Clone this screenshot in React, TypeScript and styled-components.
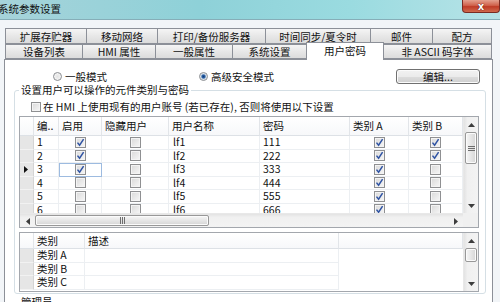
import React from "react";
import styled, { createGlobalStyle } from "styled-components";

const GlobalStyle = createGlobalStyle`
  html, body { margin: 0; padding: 0; background: #f2f5f8; }
  body {
    font-family: "Noto Sans CJK SC", "Noto Sans", sans-serif;
    font-size: 10.5px;
    color: #111;
  }
  * { box-sizing: border-box; }
`;

const Window = styled.div`
  width: 500px;
  height: 302px;
  overflow: hidden;
  background: #f2f5f8;
  display: flex;
  flex-direction: column;
`;

const TitleBar = styled.div`
  height: 20px;
  flex: none;
  display: flex;
  justify-content: space-between;
  align-items: flex-start;
  background: linear-gradient(to right, #a6d3da 0%, #8ed1d8 40%, #9adbe0 70%, #b7e3e7 100%);
  border-bottom: 1px solid #86aeb8;
`;

const Title = styled.span`
  margin-left: -2px;
  line-height: 16px;
  padding-top: 1px;
  font-size: 10.5px;
  color: #101010;
`;

const CloseBtn = styled.div`
  width: 38px;
  height: 13px;
  border: 1px solid #7a2b22;
  border-top: none;
  border-radius: 0 0 4px 4px;
  background: linear-gradient(#e4a08f, #d0624c 45%, #bf3b26 55%, #d06a4e);
  display: flex;
  align-items: center;
  justify-content: center;
  color: #fff;
  font-family: "DejaVu Sans", sans-serif;
  font-weight: bold;
  font-size: 10px;
  text-shadow: 0 0 1px #5a1a10, 0 0 1px #5a1a10;
`;

const Body = styled.div`
  flex: 1;
  display: flex;
  flex-direction: column;
  padding: 8px 7px 0 4px;
`;

const TabRow = styled.div<{ $h: number }>`
  display: flex;
  align-items: flex-end;
  height: ${(p) => p.$h}px;
  margin-left: 1px;
`;

const Tab = styled.div<{ $w: number; $active?: boolean }>`
  width: ${(p) => p.$w + 1}px;
  margin-right: -1px;
  height: ${(p) => (p.$active ? 18 : 100)}${(p) => (p.$active ? "px" : "%")};
  margin-bottom: ${(p) => (p.$active ? -1 : 0)}px;
  position: relative;
  z-index: ${(p) => (p.$active ? 2 : 1)};
  border: 1px solid #8c9098;
  border-bottom: ${(p) => (p.$active ? "none" : "1px solid #8c9098")};
  background: ${(p) => (p.$active ? "#fff" : "linear-gradient(#f5f5f5, #e6e6e6 55%, #dcdcdc)")};
  display: flex;
  justify-content: center;
  align-items: ${(p) => (p.$active ? "flex-start" : "center")};
  padding-top: ${(p) => (p.$active ? 1 : 0)}px;
  line-height: 13px;
  white-space: nowrap;
`;

const Panel = styled.div`
  width: 489px;
  flex: 1;
  background: #fff;
  border: 1px solid #8c9098;
  border-bottom: none;
  padding: 0 6px 0 9px;
  display: flex;
  flex-direction: column;
`;

const ModeRow = styled.div`
  margin-top: 9px;
  height: 15px;
  display: flex;
  align-items: center;
`;

const RadioItem = styled.label<{ $w?: number; $ml?: number }>`
  display: flex;
  align-items: center;
  gap: 3px;
  margin-left: ${(p) => p.$ml ?? 0}px;
  width: ${(p) => (p.$w ? `${p.$w}px` : "auto")};
  line-height: 12px;
`;

const RadioDot = styled.span<{ $on?: boolean }>`
  width: 9px;
  height: 9px;
  border-radius: 50%;
  border: 1px solid #8a8d91;
  background: ${(p) =>
    p.$on
      ? "radial-gradient(circle, #0f3a78 0, #2b63a8 1.6px, #cfd9e4 2.6px, #f4f4f4 4px)"
      : "radial-gradient(circle, #e3e3e3 0, #f7f7f7 4px)"};
`;

const Button = styled.div`
  margin-left: auto;
  margin-right: 6px;
  width: 84px;
  height: 15px;
  border: 1px solid #707070;
  border-radius: 3px;
  background: linear-gradient(#f2f2f2, #ebebeb 50%, #dddddd 51%, #cfcfcf);
  box-shadow: inset 0 0 0 1px #fbfbfb;
  display: flex;
  align-items: center;
  justify-content: center;
  line-height: 12px;
`;

const Group = styled.fieldset`
  margin: 0;
  padding: 0 6px 1px 4px;
  border: 1px solid #d5dfe5;
  border-radius: 3px;
  min-width: 0;
`;

const Legend = styled.legend`
  padding: 0 2px;
  line-height: 12px;
  font-size: 10.5px;
`;

const CheckRow = styled.div`
  margin-top: 4px;
  height: 14px;
  padding-left: 12px;
  display: flex;
  align-items: center;
  gap: 2px;
  line-height: 12px;
`;

const Box = styled.span<{ $size?: number }>`
  width: ${(p) => p.$size ?? 11}px;
  height: ${(p) => p.$size ?? 11}px;
  border: 1px solid #8f9092;
  background: linear-gradient(135deg, #d9d9d9, #f7f7f7);
  box-shadow: inset 0 0 0 1px #f4f4f4;
  display: flex;
  align-items: center;
  justify-content: center;
  flex: none;
`;

const GridFrame = styled.div<{ $h: number; $mt: number; $rows: string }>`
  margin-top: ${(p) => p.$mt}px;
  height: ${(p) => p.$h}px;
  width: 460px;
  border: 1px solid #a3a7ad;
  display: grid;
  grid-template-columns: 443px 15px;
  grid-template-rows: ${(p) => p.$rows};
  background: #fff;
`;

const TableArea = styled.div<{ $cols: string }>`
  overflow: hidden;
  display: grid;
  grid-template-columns: ${(p) => p.$cols};
  grid-auto-rows: min-content;
  align-content: start;
`;

const HeadCell = styled.div<{ $h: number }>`
  height: ${(p) => p.$h}px;
  border-right: 1px solid #e2e5e9;
  border-bottom: 1px solid #dde1e6;
  background: linear-gradient(#ffffff, #f7f8fa);
  padding-left: 3px;
  line-height: ${(p) => p.$h - 1}px;
  white-space: nowrap;
  overflow: hidden;
`;

const RowHead = styled.div`
  height: 13.5px;
  background: #e6e6e6;
  border-right: 1px solid #d4d4d4;
  border-bottom: 1px solid #f2f2f2;
  display: flex;
  align-items: center;
  padding-left: 4px;
`;

const Cell = styled.div<{ $center?: boolean; $pl?: number; $sel?: boolean; $blank?: boolean }>`
  height: 13.5px;
  border-right: ${(p) => (p.$blank ? "none" : "1px solid #eceff2")};
  border-bottom: ${(p) => (p.$blank ? "none" : "1px solid #eceff2")};
  display: flex;
  align-items: center;
  justify-content: ${(p) => (p.$center ? "center" : "flex-start")};
  padding-left: ${(p) => p.$pl ?? 3}px;
  padding-right: ${(p) => (p.$center ? 3 : 0)}px;
  line-height: 12px;
  white-space: nowrap;
  outline: ${(p) => (p.$sel ? "1px solid #9dbbe0" : "none")};
  outline-offset: -1px;
`;

const VScroll = styled.div`
  display: flex;
  flex-direction: column;
  background: linear-gradient(to right, #e3e3e3, #f0f0f0 25%, #f3f3f3);
  border-left: 1px solid #e8e8e8;
`;

const HScroll = styled.div`
  display: flex;
  background: linear-gradient(#e3e3e3, #f0f0f0 25%, #f3f3f3);
  border-top: 1px solid #e8e8e8;
`;

const ArrowBtn = styled.div<{ $size: number }>`
  flex: none;
  width: ${(p) => p.$size}px;
  height: ${(p) => p.$size}px;
  display: flex;
  align-items: center;
  justify-content: center;
`;

const VThumb = styled.div<{ $h: number }>`
  height: ${(p) => p.$h}px;
  margin: 0 1px;
  border: 1px solid #989898;
  border-radius: 2px;
  background: linear-gradient(to right, #f6f6f6, #e6e6e6 50%, #d6d6d6);
  box-shadow: inset 0 0 0 1px #fbfbfb;
  display: flex;
  align-items: center;
  justify-content: center;
`;

const HThumb = styled.div<{ $w: number }>`
  width: ${(p) => p.$w}px;
  margin: 1px 0;
  border: 1px solid #989898;
  border-radius: 2px;
  background: linear-gradient(#f6f6f6, #e6e6e6 50%, #d6d6d6);
  box-shadow: inset 0 0 0 1px #fbfbfb;
  display: flex;
  align-items: center;
  justify-content: center;
`;

const Spacer = styled.div`
  flex: 1;
`;

const Corner = styled.div`
  background: #f0f0f0;
`;

const Check = () => (
  <svg width="9" height="9" viewBox="0 0 9 9">
    <path d="M1.5 4.6 L3.6 7.2 L7.6 1.2" fill="none" stroke="#2f53a3" strokeWidth="1.5" />
  </svg>
);

const CheckBox = ({ on, size }: { on?: boolean; size?: number }) => (
  <Box $size={size}>{on && <Check />}</Box>
);

const Tri = ({ dir }: { dir: "up" | "down" | "left" | "right" }) => {
  const pts = {
    up: "0,4 3.5,0 7,4",
    down: "0,0 3.5,4 7,0",
    left: "4,0 0,3.5 4,7",
    right: "0,0 4,3.5 0,7",
  }[dir];
  const w = dir === "up" || dir === "down" ? 7 : 4;
  const h = dir === "up" || dir === "down" ? 4 : 7;
  return (
    <svg width={w} height={h} viewBox={`0 0 ${w} ${h}`}>
      <polygon points={pts} fill="#3d3d3d" />
    </svg>
  );
};

const Grip = ({ vertical }: { vertical?: boolean }) =>
  vertical ? (
    <svg width="7" height="5" viewBox="0 0 7 5">
      <path d="M0 0.5h7M0 2.5h7M0 4.5h7" stroke="#6e6e6e" strokeWidth="1" />
    </svg>
  ) : (
    <svg width="5" height="7" viewBox="0 0 5 7">
      <path d="M0.5 0v7M2.5 0v7M4.5 0v7" stroke="#6e6e6e" strokeWidth="1" />
    </svg>
  );

const RowMarker = () => (
  <svg width="4" height="7" viewBox="0 0 4 7">
    <polygon points="0,0 4,3.5 0,7" fill="#111" />
  </svg>
);

const tabs1 = [
  { t: "扩展存贮器", w: 81 },
  { t: "移动网络", w: 71 },
  { t: "打印/备份服务器", w: 108 },
  { t: "时间同步/夏令时", w: 105 },
  { t: "邮件", w: 62 },
  { t: "配方", w: 59 },
];

const tabs2 = [
  { t: "设备列表", w: 77 },
  { t: "HMI 属性", w: 73 },
  { t: "一般属性", w: 77 },
  { t: "系统设置", w: 74 },
  { t: "用户密码", w: 77, active: true },
  { t: "非 ASCII 码字体", w: 108 },
];

const users = [
  { n: 1, en: true, name: "lf1", pw: "111", a: true, b: true },
  { n: 2, en: true, name: "lf2", pw: "222", a: true, b: true },
  { n: 3, en: true, name: "lf3", pw: "333", a: true, b: false, cur: true },
  { n: 4, en: false, name: "lf4", pw: "444", a: true, b: false },
  { n: 5, en: false, name: "lf5", pw: "555", a: true, b: false },
  { n: 6, en: false, name: "lf6", pw: "666", a: true, b: false },
];

const userHead = ["", "编..", "启用", "隐藏用户", "用户名称", "密码", "类别 A", "类别 B"];

const categories = ["类别 A", "类别 B", "类别 C"];

export default function App() {
  return (
    <>
      <GlobalStyle />
      <Window>
        <TitleBar>
          <Title>系统参数设置</Title>
          <CloseBtn>x</CloseBtn>
        </TitleBar>
        <Body>
          <TabRow $h={16}>
            {tabs1.map((t) => (
              <Tab key={t.t} $w={t.w}>{t.t}</Tab>
            ))}
          </TabRow>
          <TabRow $h={15}>
            {tabs2.map((t) => (
              <Tab key={t.t} $w={t.w} $active={t.active}>{t.t}</Tab>
            ))}
          </TabRow>
          <Panel>
            <ModeRow>
              <RadioItem $ml={39} $w={146}>
                <RadioDot />
                一般模式
              </RadioItem>
              <RadioItem>
                <RadioDot $on />
                高级安全模式
              </RadioItem>
              <Button>编辑...</Button>
            </ModeRow>
            <Group>
              <Legend>设置用户可以操作的元件类别与密码</Legend>
              <CheckRow>
                <CheckBox size={10} />
                在 HMI 上使用现有的用户账号 (若已存在), 否则将使用以下设置
              </CheckRow>
              <GridFrame $mt={2} $h={112} $rows="96px 14px">
                <TableArea $cols="14px 25px 43px 67px 91px 90px 59px 54px">
                  {userHead.map((h, i) => (
                    <HeadCell key={i} $h={19}>{h}</HeadCell>
                  ))}
                  {users.map((u) => (
                    <React.Fragment key={u.n}>
                      <RowHead>{u.cur && <RowMarker />}</RowHead>
                      <Cell>{u.n}</Cell>
                      <Cell $center $sel={u.cur}>
                        <CheckBox on={u.en} />
                      </Cell>
                      <Cell $center>
                        <CheckBox />
                      </Cell>
                      <Cell $pl={4}>{u.name}</Cell>
                      <Cell>{u.pw}</Cell>
                      <Cell $center>
                        <CheckBox on={u.a} />
                      </Cell>
                      <Cell $center>
                        <CheckBox on={u.b} />
                      </Cell>
                    </React.Fragment>
                  ))}
                </TableArea>
                <VScroll>
                  <ArrowBtn $size={15}>
                    <Tri dir="up" />
                  </ArrowBtn>
                  <VThumb $h={32}>
                    <Grip vertical />
                  </VThumb>
                  <Spacer />
                  <ArrowBtn $size={15}>
                    <Tri dir="down" />
                  </ArrowBtn>
                </VScroll>
                <HScroll>
                  <ArrowBtn $size={15}>
                    <Tri dir="left" />
                  </ArrowBtn>
                  <HThumb $w={174}>
                    <Grip />
                  </HThumb>
                  <Spacer />
                  <ArrowBtn $size={15}>
                    <Tri dir="right" />
                  </ArrowBtn>
                </HScroll>
                <Corner />
              </GridFrame>
              <GridFrame $mt={4} $h={60} $rows="58px">
                <TableArea $cols="14px 51px 254px 124px">
                  <HeadCell $h={16} />
                  <HeadCell $h={16}>类别</HeadCell>
                  <HeadCell $h={16}>描述</HeadCell>
                  <HeadCell $h={16} />
                  {categories.map((c) => (
                    <React.Fragment key={c}>
                      <RowHead />
                      <Cell>{c}</Cell>
                      <Cell />
                      <Cell $blank />
                    </React.Fragment>
                  ))}
                </TableArea>
                <VScroll>
                  <ArrowBtn $size={15}>
                    <Tri dir="up" />
                  </ArrowBtn>
                  <VThumb $h={14} />
                  <Spacer />
                  <ArrowBtn $size={15}>
                    <Tri dir="down" />
                  </ArrowBtn>
                </VScroll>
              </GridFrame>
            </Group>
            <Group style={{ marginTop: 2 }}>
              <Legend>管理员</Legend>
            </Group>
          </Panel>
        </Body>
      </Window>
    </>
  );
}
